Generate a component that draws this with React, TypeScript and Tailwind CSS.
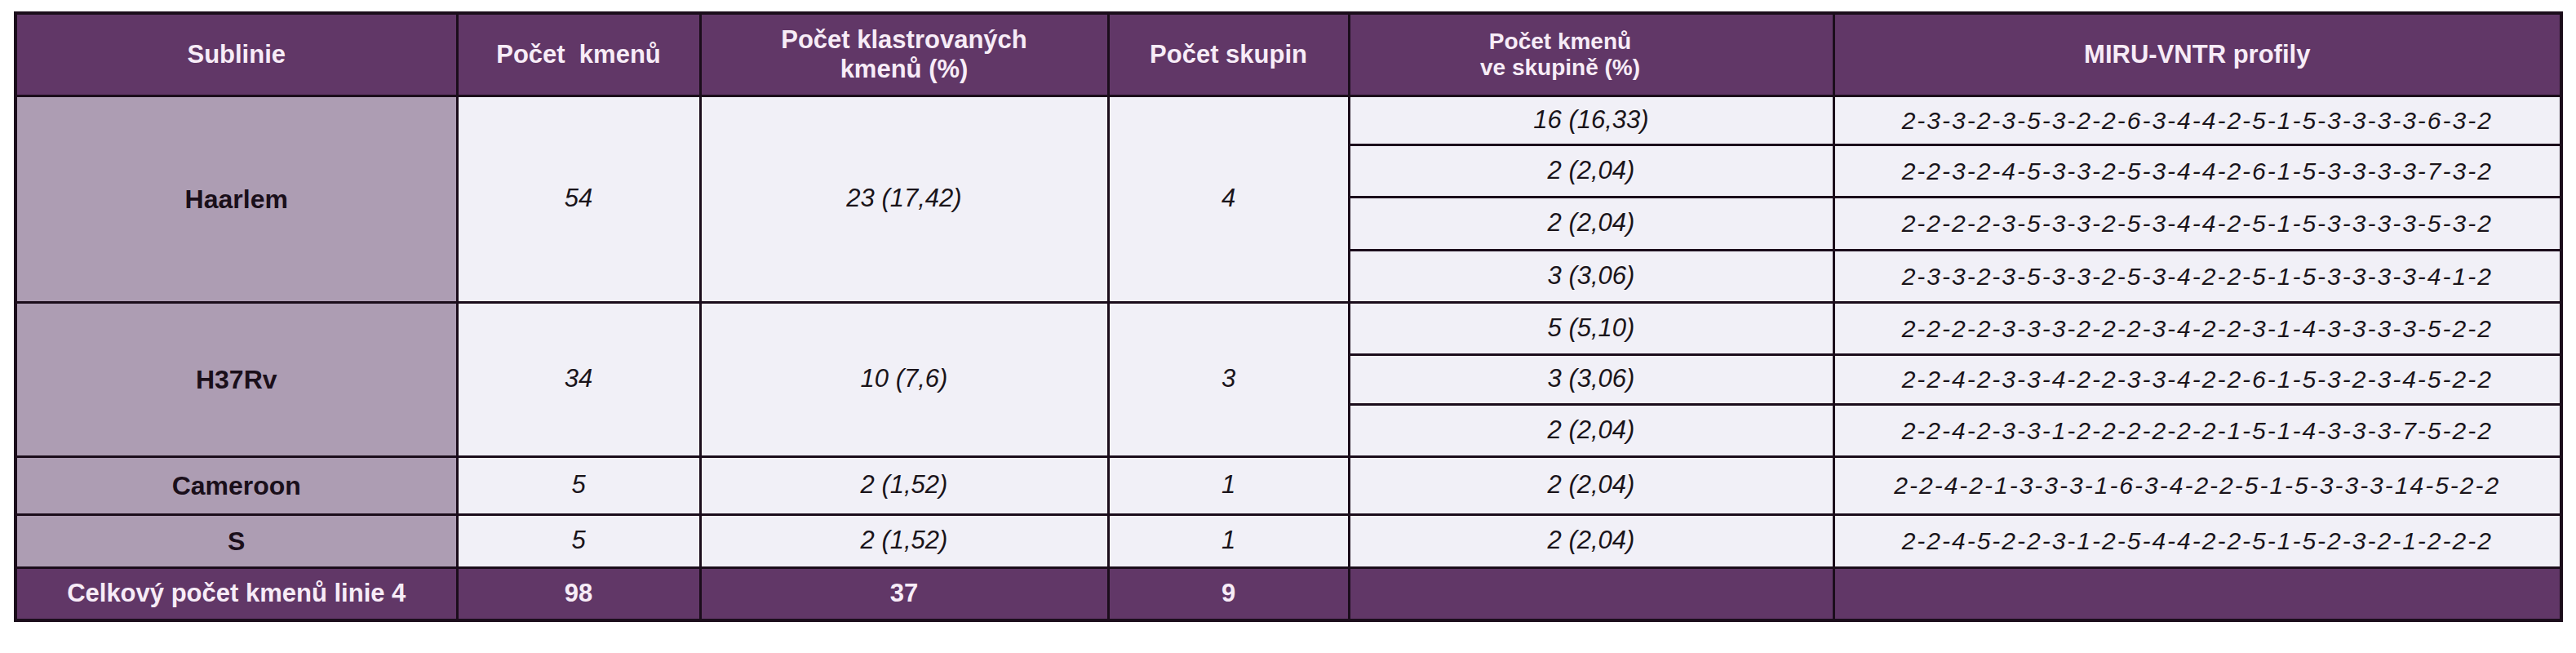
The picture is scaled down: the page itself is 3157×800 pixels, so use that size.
import React from "react";

// ==================== DATA ==================== //
type Group = {
  name: string;
  count: string;
  clustered: string;
  groups: string;
  sub: { pct: string; profile: string; h: string }[];
};

const groups: Group[] = [
  {
    name: "Haarlem",
    count: "54",
    clustered: "23 (17,42)",
    groups: "4",
    sub: [
      { pct: "16 (16,33)", profile: "2-3-3-2-3-5-3-2-2-6-3-4-4-2-5-1-5-3-3-3-3-6-3-2", h: "h-[60px]" },
      { pct: "2 (2,04)", profile: "2-2-3-2-4-5-3-3-2-5-3-4-4-2-6-1-5-3-3-3-3-7-3-2", h: "h-[64px]" },
      { pct: "2 (2,04)", profile: "2-2-2-2-3-5-3-3-2-5-3-4-4-2-5-1-5-3-3-3-3-5-3-2", h: "h-[65px]" },
      { pct: "3 (3,06)", profile: "2-3-3-2-3-5-3-3-2-5-3-4-2-2-5-1-5-3-3-3-3-4-1-2", h: "h-[64px]" },
    ],
  },
  {
    name: "H37Rv",
    count: "34",
    clustered: "10 (7,6)",
    groups: "3",
    sub: [
      { pct: "5 (5,10)", profile: "2-2-2-2-3-3-3-2-2-2-3-4-2-2-3-1-4-3-3-3-3-5-2-2", h: "h-[64px]" },
      { pct: "3 (3,06)", profile: "2-2-4-2-3-3-4-2-2-3-3-4-2-2-6-1-5-3-2-3-4-5-2-2", h: "h-[61px]" },
      { pct: "2 (2,04)", profile: "2-2-4-2-3-3-1-2-2-2-2-2-2-1-5-1-4-3-3-3-7-5-2-2", h: "h-[64px]" },
    ],
  },
  {
    name: "Cameroon",
    count: "5",
    clustered: "2 (1,52)",
    groups: "1",
    sub: [
      { pct: "2 (2,04)", profile: "2-2-4-2-1-3-3-3-1-6-3-4-2-2-5-1-5-3-3-3-14-5-2-2", h: "h-[71px]" },
    ],
  },
  {
    name: "S",
    count: "5",
    clustered: "2 (1,52)",
    groups: "1",
    sub: [
      { pct: "2 (2,04)", profile: "2-2-4-5-2-2-3-1-2-5-4-4-2-2-5-1-5-2-3-2-1-2-2-2", h: "h-[65px]" },
    ],
  },
];

const th = "border-[3px] border-[#1b0d1b] bg-[#613767] text-[#f7ecf7] font-bold text-[31px] text-center align-middle";
const td = "border-[3px] border-[#1b0d1b] bg-[#f1f0f7] text-[#1a141a] italic text-[31px] text-center align-middle";
const tdName = "border-[3px] border-[#1b0d1b] bg-[#ad9db3] text-[#1a0f1a] font-bold text-[32px] text-center align-middle";
const tdProfile = "border-[3px] border-[#1b0d1b] bg-[#f1f0f7] text-[#1a141a] italic text-[30px] tracking-[2px] text-center align-middle";

// ==================== PRINCIPAL ==================== //
export default function App() {
  return (
    <div className="w-[3157px] h-[800px] bg-white pt-[14px] pl-[17px] font-['Liberation_Sans',Arial,sans-serif]">
      <table className="table-fixed border-collapse border-4 border-[#1b0d1b] w-[3120px]">
        <colgroup>
          <col className="w-[541px]" />
          <col className="w-[298px]" />
          <col className="w-[500px]" />
          <col className="w-[295px]" />
          <col className="w-[594px]" />
          <col className="w-[892px]" />
        </colgroup>
        <thead>
          <tr className="h-[101px]">
            <th className={th}>Sublinie</th>
            <th className={`${th} whitespace-pre`}>Počet  kmenů</th>
            <th className={th}>
              <div className="leading-[36px]">Počet klastrovaných</div>
              <div className="leading-[36px]">kmenů (%)</div>
            </th>
            <th className={th}>Počet skupin</th>
            <th className={`${th} pr-[76px]`}>
              <div className="text-[28px] leading-[32px]">Počet kmenů</div>
              <div className="text-[28px] leading-[32px]">ve skupině (%)</div>
            </th>
            <th className={th}>MIRU-VNTR profily</th>
          </tr>
        </thead>
        <tbody>
          {groups.map((g) =>
            g.sub.map((s, i) => (
              <tr key={g.name + i} className={s.h}>
                {i === 0 && (
                  <>
                    <td rowSpan={g.sub.length} className={tdName}>
                      {g.name}
                    </td>
                    <td rowSpan={g.sub.length} className={td}>
                      {g.count}
                    </td>
                    <td rowSpan={g.sub.length} className={td}>
                      {g.clustered}
                    </td>
                    <td rowSpan={g.sub.length} className={td}>
                      {g.groups}
                    </td>
                  </>
                )}
                <td className={td}>{s.pct}</td>
                <td className={tdProfile}>{s.profile}</td>
              </tr>
            ))
          )}
          <tr className="h-[65px]">
            <td className={th}>Celkový počet kmenů linie 4</td>
            <td className={th}>98</td>
            <td className={th}>37</td>
            <td className={th}>9</td>
            <td className={th}></td>
            <td className={th}></td>
          </tr>
        </tbody>
      </table>
    </div>
  );
}
